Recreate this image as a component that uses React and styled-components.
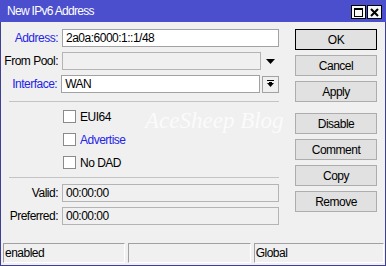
import React from "react"
import styled, {createGlobalStyle} from "styled-components"

const GlobalStyle = createGlobalStyle`
  html, body {
    margin: 0;
    padding: 0;
    background: #f0f0f0;
  }
  body {
    font-family: "Liberation Sans", Arial, sans-serif;
    font-size: 12px;
    letter-spacing: -0.5px;
    color: #000;
  }
`

const Window = styled.div`
  width: 386px;
  height: 266px;
  box-sizing: border-box;
  display: flex;
  flex-direction: column;
  background: #f0f0f0;
  border: 1px solid #3d4094;
  border-top: none;
`

const TitleBar = styled.div`
  height: 22px;
  margin: 0 -1px;
  padding: 0 4px 0 7px;
  display: flex;
  align-items: center;
  justify-content: space-between;
  background: #4b4fcd;
  color: #fff;
  font-size: 12px;
  letter-spacing: -0.7px;
`

const TitleButtons = styled.div`
  display: flex;
  gap: 1px;
  padding-top: 2px;
`

const TitleButton = styled.div`
  width: 15px;
  height: 14px;
  box-sizing: border-box;
  background: #f7f7f7;
  border: 1px solid #000;
  display: flex;
  align-items: center;
  justify-content: center;
`

const Body = styled.div`
  position: relative;
  display: flex;
`

const Form = styled.div`
  width: 278px;
  padding-top: 7px;
  display: flex;
  flex-direction: column;
`

const Row = styled.div`
  display: flex;
  align-items: center;
  height: 18px;
  margin-bottom: ${p => p.$gap ?? 5}px;
`

const Label = styled.div`
  width: 57px;
  margin-right: 4px;
  text-align: right;
  white-space: nowrap;
  color: ${p => p.$blue ? "#2424e8" : "#000"};
`

const Field = styled.div`
  flex: ${p => p.$fixed ? "0 0 199px" : "1"};
  height: 18px;
  box-sizing: border-box;
  padding: 0 3px;
  display: flex;
  align-items: center;
  background: ${p => p.$grey ? "#f0f0f0" : "#fff"};
  border: 1px solid ${p => p.$grey ? "#b4b4b4" : "#a2a2a2"};
  white-space: nowrap;
`

const ArrowSlot = styled.div`
  flex: 1;
  display: flex;
  align-items: center;
  justify-content: center;
  padding-left: 1px;
`

const DropButton = styled.div`
  width: 17px;
  height: 17px;
  margin-left: 2px;
  box-sizing: border-box;
  border: 1px solid #a2a2a2;
  background: #f0f0f0;
  display: flex;
  align-items: center;
  justify-content: center;
`

const Separator = styled.div`
  height: 1px;
  margin: 8px 0 ${p => p.$after ?? 8}px 8px;
  width: 270px;
  background: #c4c4c4;
`

const CheckRow = styled.label`
  display: flex;
  align-items: center;
  height: 13px;
  margin-left: 62px;
  margin-bottom: ${p => p.$last ? 0 : 10}px;
  color: ${p => p.$blue ? "#2424e8" : "#000"};
`

const Box = styled.span`
  width: 13px;
  height: 13px;
  box-sizing: border-box;
  margin-right: 4px;
  background: #fff;
  border: 1px solid #8a8a8a;
`

const Buttons = styled.div`
  width: 82px;
  margin-left: 16px;
  padding-top: 7px;
  display: flex;
  flex-direction: column;
`

const Button = styled.div`
  height: 21px;
  box-sizing: border-box;
  margin-bottom: ${p => p.$gap ?? 5}px;
  display: flex;
  align-items: center;
  justify-content: center;
  background: #e1e1e1;
  border: 1px solid ${p => p.$default ? "#000" : "#adadad"};
`

const Watermark = styled.div`
  position: absolute;
  left: 144px;
  top: 86px;
  font-family: "Liberation Serif", serif;
  font-style: italic;
  font-size: 23px;
  letter-spacing: 0;
  color: rgba(255, 255, 255, 0.75);
  pointer-events: none;
`

const StatusBar = styled.div`
  margin-top: auto;
  margin-bottom: 2px;
  padding: 0 1px 0 2px;
  display: flex;
  gap: 3px;
`

const Segment = styled.div`
  width: ${p => p.$w}px;
  height: 20px;
  box-sizing: border-box;
  padding-left: 1px;
  display: flex;
  align-items: center;
  border: 1px solid #a0a0a0;
  border-right-color: #fff;
  border-bottom-color: #fff;
`

const MaxIcon = () => (
    <svg width="9" height="9" viewBox="0 0 9 9">
        <rect x="0.5" y="0.5" width="8" height="8" fill="none" stroke="#000"/>
        <rect x="0" y="0" width="9" height="2" fill="#000"/>
    </svg>
)

const CloseIcon = () => (
    <svg width="9" height="9" viewBox="0 0 9 9">
        <path d="M1 1 L8 8 M8 1 L1 8" stroke="#000" strokeWidth="2"/>
    </svg>
)

const PoolArrow = () => (
    <svg width="9" height="5" viewBox="0 0 9 5">
        <polygon points="0,0 9,0 4.5,5" fill="#000"/>
    </svg>
)

const DropIcon = () => (
    <svg width="7" height="8" viewBox="0 0 7 8">
        <rect x="0" y="0" width="7" height="1" fill="#000"/>
        <polygon points="0,3 7,3 3.5,7" fill="#000"/>
        <rect x="2" y="2" width="3" height="2" fill="#000"/>
    </svg>
)

const App = () => {
    return (
        <>
            <GlobalStyle/>
            <Window>
                <TitleBar>
                    <span>New IPv6 Address</span>
                    <TitleButtons>
                        <TitleButton><MaxIcon/></TitleButton>
                        <TitleButton><CloseIcon/></TitleButton>
                    </TitleButtons>
                </TitleBar>

                <Body>
                    <Form>
                        <Row>
                            <Label $blue>Address:</Label>
                            <Field>2a0a:6000:1::1/48</Field>
                        </Row>
                        <Row>
                            <Label>From Pool:</Label>
                            <Field $fixed $grey/>
                            <ArrowSlot><PoolArrow/></ArrowSlot>
                        </Row>
                        <Row $gap={0}>
                            <Label $blue>Interface:</Label>
                            <Field $fixed>WAN</Field>
                            <DropButton><DropIcon/></DropButton>
                        </Row>

                        <Separator/>

                        <CheckRow><Box/>EUI64</CheckRow>
                        <CheckRow $blue><Box/>Advertise</CheckRow>
                        <CheckRow $last><Box/>No DAD</CheckRow>

                        <Separator $after={6}/>

                        <Row>
                            <Label>Valid:</Label>
                            <Field $grey>00:00:00</Field>
                        </Row>
                        <Row $gap={0}>
                            <Label>Preferred:</Label>
                            <Field $grey>00:00:00</Field>
                        </Row>
                    </Form>

                    <Buttons>
                        <Button $default>OK</Button>
                        <Button>Cancel</Button>
                        <Button $gap={11}>Apply</Button>
                        <Button>Disable</Button>
                        <Button>Comment</Button>
                        <Button>Copy</Button>
                        <Button>Remove</Button>
                    </Buttons>

                    <Watermark>AceSheep Blog</Watermark>
                </Body>

                <StatusBar>
                    <Segment $w={123}>enabled</Segment>
                    <Segment $w={123}/>
                    <Segment $w={131}>Global</Segment>
                </StatusBar>
            </Window>
        </>
    )
}

export default App
